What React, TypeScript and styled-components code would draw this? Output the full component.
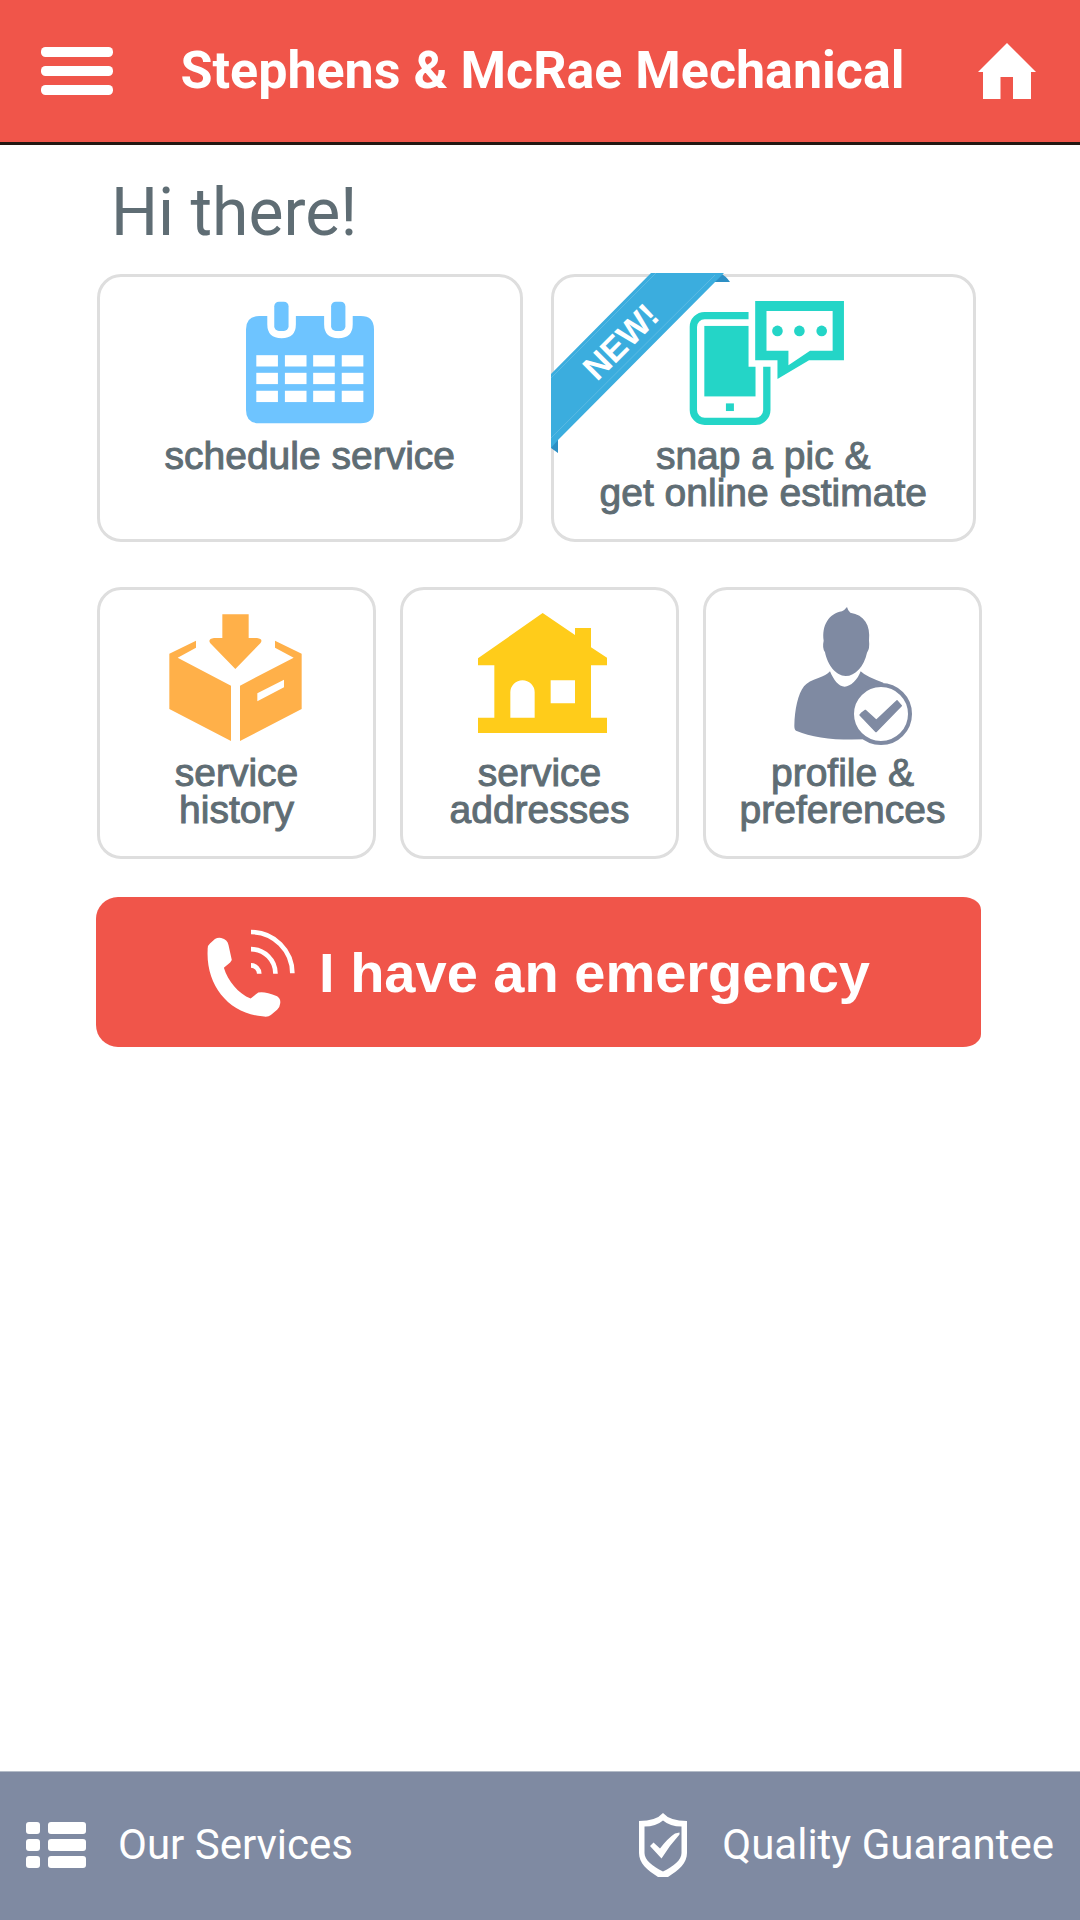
import React from "react";
import styled, { createGlobalStyle } from "styled-components";

const colors = {
  brand: "#f0554a",
  slate: "#5f6d74",
  bar: "#7f8aa2",
  outline: "#dedede",
  white: "#ffffff",
};

const GlobalStyle = createGlobalStyle`
  *, *::before, *::after { box-sizing: border-box; }
  body {
    margin: 0;
    background: ${colors.white};
    font-family: Roboto, "Liberation Sans", sans-serif;
  }
  button { font: inherit; cursor: pointer; }
  svg { display: block; }
`;

const Page = styled.div`
  display: flex;
  flex-direction: column;
  min-height: 100vh;
`;

const Header = styled.header`
  display: grid;
  grid-template-columns: 72px 1fr 64px;
  align-items: center;
  height: 145px;
  padding: 0 44px 0 41px;
  background: ${colors.brand};
  border-bottom: 3px solid #221712;
`;

const IconButton = styled.button`
  justify-self: end;
  padding: 0;
  border: 0;
  background: none;
  color: ${colors.white};
`;

const Title = styled.h1`
  margin: 0;
  color: ${colors.white};
  font-size: 52px;
  font-weight: 700;
  line-height: 60px;
  text-align: center;
`;

const Main = styled.main`
  flex: 1;
  padding: 28px 98px 48px 97px;
`;

const Greeting = styled.h2`
  margin: 0 14px 21px;
  color: ${colors.slate};
  font-size: 66px;
  font-weight: 400;
  line-height: 80px;
`;

const CardRow = styled.div<{ $columns: number; $gap: number; $inset?: number }>`
  display: grid;
  grid-template-columns: repeat(${(p) => p.$columns}, minmax(0, 1fr));
  gap: ${(p) => p.$gap}px;
  padding-right: ${(p) => p.$inset ?? 0}px;
`;

const Card = styled.button<{ $top: number; $gap: number; $height: number }>`
  position: relative;
  display: flex;
  flex-direction: column;
  align-items: center;
  gap: ${(p) => p.$gap}px;
  min-height: ${(p) => p.$height}px;
  padding: ${(p) => p.$top}px 0 24px;
  border: 3px solid ${colors.outline};
  border-radius: 24px;
  background: ${colors.white};
`;

const CardLabel = styled.span`
  color: ${colors.slate};
  font-family: "Liberation Sans", Arial, sans-serif;
  font-size: 39px;
  line-height: 37px;
  text-align: center;
  white-space: pre-line;
  -webkit-text-stroke: 1px ${colors.slate};
`;

const Ribbon = styled.svg`
  position: absolute;
  top: -4px;
  left: -3px;
`;

const RibbonText = styled.text`
  fill: ${colors.white};
  font-family: "Liberation Sans", Arial, sans-serif;
  font-size: 34px;
  font-weight: 700;
`;

const Stack = styled.div`
  display: flex;
  flex-direction: column;
`;

const PrimaryCards = styled(CardRow)`
  margin-bottom: 45px;
`;

const SecondaryCards = styled(CardRow)`
  margin-bottom: 38px;
`;

const EmergencyButton = styled.button`
  display: flex;
  align-items: center;
  justify-content: center;
  gap: 24px;
  height: 150px;
  margin: 0 1px 0 -1px;
  padding: 2px 0 0;
  border: 0;
  border-radius: 22px 18px 18px 22px / 22px 13px 13px 22px;
  background: ${colors.brand};
  color: ${colors.white};
  font-family: "Liberation Sans", Arial, sans-serif;
  font-size: 56px;
  font-weight: 700;
  line-height: 64px;
`;

const Footer = styled.footer`
  display: flex;
  align-items: center;
  justify-content: space-between;
  height: 149px;
  padding: 0 26px 2px;
  border-top: 1px solid #b4bcc8;
  background: ${colors.bar};
`;

const FooterLink = styled.a`
  display: flex;
  align-items: center;
  gap: 32px;
  color: ${colors.white};
  font-size: 42px;
  line-height: 48px;
  text-decoration: none;
`;

const MenuIcon = () => (
  <svg width="72" height="48" viewBox="0 0 72 48" fill="currentColor" aria-hidden="true">
    <rect width="72" height="10" rx="4.5" />
    <rect y="19" width="72" height="10" rx="4.5" />
    <rect y="38" width="72" height="10" rx="4.5" />
  </svg>
);

const HomeIcon = () => (
  <svg width="58" height="56" viewBox="0 0 58 56" fill="currentColor" aria-hidden="true">
    <path d="M29 0 58 29H53V56H35V34H22.500V56H5V29H0Z" />
  </svg>
);

const CalendarIcon = () => (
  <svg width="128" height="124" viewBox="498 122 385 373" aria-hidden="true">
    <path
      fill="#6ec4ff"
      d="M538 167H562V192Q562 234 605 234T648 192V167H733V192Q733 234 776 234T819 192V167H843Q883 167 883 207V450Q883 490 843 490H538Q498 490 498 450V207Q498 167 538 167Z"
    />
    <rect x="583" y="124" width="43" height="88" rx="14" fill="#6ec4ff" />
    <rect x="754" y="124" width="43" height="88" rx="14" fill="#6ec4ff" />
    {[285, 338, 392].map((y) =>
      [529, 615, 700, 786].map((x) => (
        <rect key={`${x}-${y}`} x={x} y={y} width="65" height="34" fill="#fff" />
      ))
    )}
  </svg>
);

const PhoneChatIcon = () => (
  <svg width="161" height="124" viewBox="427 122 484 373" aria-hidden="true">
    <rect x="458" y="166" width="221" height="318" rx="34" fill="#fff" stroke="#24d5c7" strokeWidth="22" />
    <rect x="491" y="197" width="154" height="212" fill="#24d5c7" />
    <rect x="556" y="430" width="24" height="23" fill="#24d5c7" />
    <path fill="#fff" d="M624 122H911V320H692V320H624Z" />
    <path
      fill="#24d5c7"
      fillRule="evenodd"
      d="M644 122H911V300H806L711 357V300H644ZM678 152V272H744V315L809 272H877V152Z"
    />
    <circle cx="711" cy="212" r="16" fill="#24d5c7" />
    <circle cx="777" cy="212" r="16" fill="#24d5c7" />
    <circle cx="844" cy="212" r="16" fill="#24d5c7" />
  </svg>
);

const BoxIcon = () => (
  <svg width="135" height="138" viewBox="267 112 405 414" fill="#ffb049" aria-hidden="true">
    <path d="M427 134H506V205H531Q551 208 541 221L466 298 391 221Q382 208 402 205H427Z" />
    <path d="M268 252 348 213V234L293 264 453 348V514L268 418Z" />
    <path
      fillRule="evenodd"
      d="M665 252 585 213V234L641 264 480 348V514L665 418ZM532 371 612 330V353L532 395Z"
    />
  </svg>
);

const HouseIcon = () => (
  <svg width="135" height="138" viewBox="246 112 405 414" fill="#ffcc1a" aria-hidden="true">
    <path
      fillRule="evenodd"
      d="M458 130 555 196V175H603V233L651 264V287H603V444H651V490H264V444H313V287H264V266ZM361 444H434V368A36.500 36.500 0 0 0 361 368ZM482 332V401H555V332Z"
    />
  </svg>
);

const ProfileIcon = () => (
  <svg width="139" height="138" viewBox="251 112 417 414" fill="#7f8aa2" aria-hidden="true">
    <path d="M458 125Q466 121 473 112Q475 122 483 129C525 136 544 165 539 213Q542 236 533 249C524 290 498 319 469 319C440 319 415 287 407 248Q398 235 403 213C397 168 418 132 458 125Z" />
    <path d="M422 305C433 331 448 351 466 351S505 330 514 305Q530 321 582 339L570 506Q410 520 320 483Q315 480 315 468C316 420 326 372 344 350Q358 334 387 325Q411 317 422 305Z" />
    <circle cx="575" cy="433" r="87" fill="#fff" stroke="#7f8aa2" strokeWidth="12" />
    <path
      d="M516 431 528 422 561 452 623 393 636 408 560 486 512 436Z"
      stroke="#7f8aa2"
      strokeWidth="4"
      strokeLinejoin="round"
    />
  </svg>
);

const CallIcon = () => (
  <svg width="88" height="89" viewBox="378 143 266 267" aria-hidden="true">
    <path
      fill="#fff"
      d="M380 205Q379 192 387 186L402 172Q411 167 421 169Q440 174 443 190L453 236 448 243 429 259C441 299 473 338 510 352L533 334Q551 329 590 345Q602 353 599 368Q598 380 590 386L571 402Q562 410 545 406C444 398 374 311 380 205Z"
    />
    <g fill="none" stroke="#fff" strokeWidth="14">
      <path d="M511 151A125 125 0 0 1 636 276" />
      <path d="M511 203A74 74 0 0 1 585 277" />
      <path d="M511 252A25 25 0 0 1 536 277" />
    </g>
  </svg>
);

const ListIcon = () => (
  <svg width="60" height="46" viewBox="0 0 60 46" fill="currentColor" aria-hidden="true">
    {[0, 17, 34].map((y) => (
      <React.Fragment key={y}>
        <rect y={y} width="14" height="12" rx="3" />
        <rect x="22" y={y} width="38" height="12" rx="3" />
      </React.Fragment>
    ))}
  </svg>
);

const ShieldIcon = () => (
  <svg width="51" height="64" viewBox="0 0 51 64" fill="currentColor" aria-hidden="true">
    <path
      fillRule="evenodd"
      d="M24 0Q31 8 48 8V40C48 50 40 57 29 64H19C8 57 0 50 0 40V8Q17 8 24 0ZM24 7.500Q17 13.500 5.500 13.500V40C5.500 47 13 53 24 58.500C35 53 42.500 47 42.500 40V13.500Q31 13.500 24 7.500Z"
    />
    <path d="M11 33 14.500 29.500 21 35.500Q29 25 36 20.500L40.500 19.500V21.500Q30 33 22.500 45.500Z" />
  </svg>
);

const NewRibbon = () => (
  <Ribbon width="179" height="180" viewBox="0 0 179 180">
    <path fill="#2d8fc4" d="M169 0Q175 3 179 9H160ZM0 175 7 180V160H0Z" />
    <path fill="#3badde" d="M0 101 100 0H173L7 167 0 175Z" />
    <path stroke="#5bb9e2" d="M0 105 105 0M0 165 164 2" />
    <RibbonText transform="translate(46 109) rotate(-45)">NEW!</RibbonText>
  </Ribbon>
);

const primaryActions = [
  { label: "schedule service", Icon: CalendarIcon, isNew: false },
  { label: "snap a pic &\nget online estimate", Icon: PhoneChatIcon, isNew: true },
];

const secondaryActions = [
  { label: "service\nhistory", Icon: BoxIcon },
  { label: "service\naddresses", Icon: HouseIcon },
  { label: "profile &\npreferences", Icon: ProfileIcon },
];

export default function App() {
  return (
    <Page>
      <GlobalStyle />
      <Header>
        <IconButton type="button" aria-label="Menu">
          <MenuIcon />
        </IconButton>
        <Title>Stephens &amp; McRae Mechanical</Title>
        <IconButton type="button" aria-label="Home">
          <HomeIcon />
        </IconButton>
      </Header>
      <Main>
        <Greeting>Hi there!</Greeting>
        <Stack>
          <PrimaryCards $columns={2} $gap={28} $inset={6}>
            {primaryActions.map(({ label, Icon, isNew }) => (
              <Card key={label} type="button" $top={24} $gap={12} $height={268}>
                <Icon />
                <CardLabel>{label}</CardLabel>
                {isNew && <NewRibbon />}
              </Card>
            ))}
          </PrimaryCards>
          <SecondaryCards $columns={3} $gap={24}>
            {secondaryActions.map(({ label, Icon }) => (
              <Card key={label} type="button" $top={17} $gap={9} $height={272}>
                <Icon />
                <CardLabel>{label}</CardLabel>
              </Card>
            ))}
          </SecondaryCards>
          <EmergencyButton type="button">
            <CallIcon />
            I have an emergency
          </EmergencyButton>
        </Stack>
      </Main>
      <Footer>
        <FooterLink href="#services">
          <ListIcon />
          Our Services
        </FooterLink>
        <FooterLink href="#guarantee">
          <ShieldIcon />
          Quality Guarantee
        </FooterLink>
      </Footer>
    </Page>
  );
}
